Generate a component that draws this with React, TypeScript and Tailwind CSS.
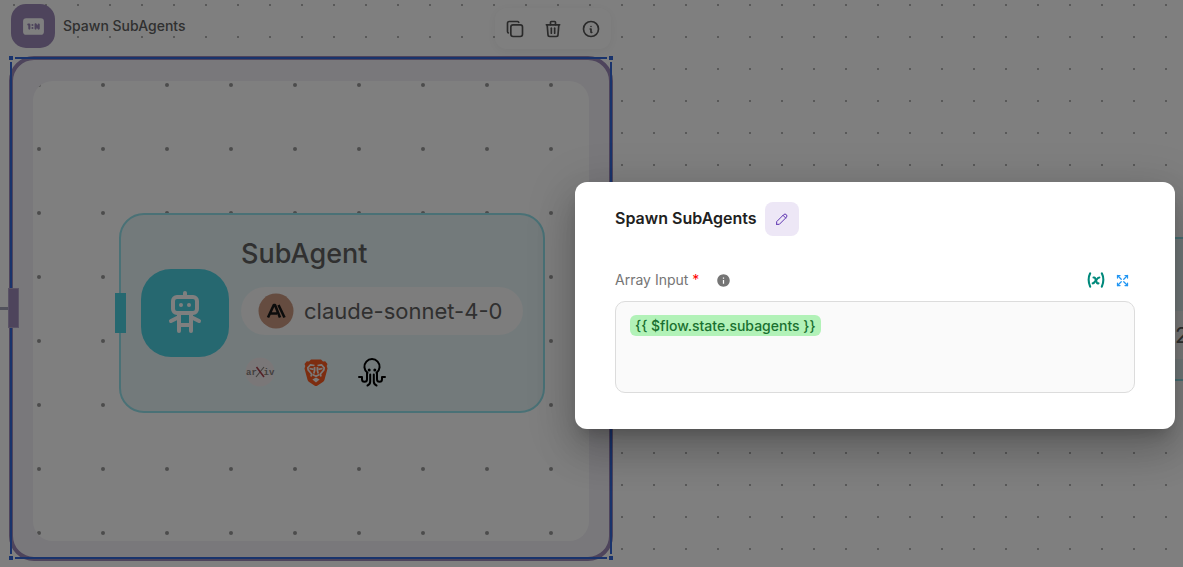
import { useState } from "react";
import {
    TbArrowsMaximize,
    TbCopy,
    TbInfoCircle,
    TbPencil,
    TbRelationOneToManyFilled,
    TbRobot,
    TbTrash,
    TbVariable,
} from "react-icons/tb";
import { MdInfo } from "react-icons/md";

function DotGrid({ id, gap, x, y, r }: { id: string; gap: number; x: number; y: number; r: number }) {
    return (
        <svg className="absolute inset-0 size-full" aria-hidden="true">
            <pattern id={id} x={x - gap / 2} y={y - gap / 2} width={gap} height={gap} patternUnits="userSpaceOnUse">
                <circle cx={gap / 2} cy={gap / 2} r={r} fill="#999999" />
            </pattern>
            <rect width="100%" height="100%" fill={`url(#${id})`} />
        </svg>
    );
}

function AnthropicLogo() {
    return (
        <svg viewBox="0 0 36 36" className="size-9" aria-hidden="true">
            <circle cx="18" cy="18" r="17.5" fill="#CA9881" />
            <path
                d="M10 24.500 L15.800 12 H17 L22 24.500 M12.500 20.500 H19 M20.500 12 L26.500 24.500"
                fill="none"
                stroke="#191918"
                strokeWidth="2.6"
                strokeLinejoin="round"
            />
        </svg>
    );
}

function BraveLogo() {
    return (
        <svg viewBox="0 0 24 27" className="h-[27px] w-6" aria-hidden="true">
            <path
                d="M7 .5h10l2 2 2.200-.2L23.500 5l-.8 2 .8 2.500-3 11.300c-.5 1.400-1.400 2.100-2.400 2.800l-4.900 3.100c-.7.4-1.700.4-2.400 0l-4.900-3.100c-1-.7-1.900-1.400-2.400-2.800L.5 9.500 1.300 7 .5 5l2.300-2.700 2.200.2z"
                fill="#FB5A20"
            />
            <g fill="none" stroke="#F6F3F1" strokeWidth="1.700" strokeLinejoin="round">
                <path d="M10.500 6.500 6.500 5.800 3.800 8.800 4.200 11 7.600 15 7 17.500M13.500 6.500l4-.7 2.700 3L19.800 11l-3.400 4 .6 2.500" />
                <path d="M5.500 9.500l4 .8M18.500 9.500l-4 .8M10.600 8v3.500l-.8 3M13.400 8v3.500l.8 3" />
                <path d="M8.500 15.500 12 17.200l3.500-1.700" />
            </g>
            <path d="M12 18.500l3.600 2-3.600 3-3.600-3z" fill="#F6F3F1" />
        </svg>
    );
}

function OctopusLogo() {
    return (
        <svg viewBox="0 0 28 28" className="size-7 overflow-visible" aria-hidden="true">
            <g fill="none" stroke="#000" strokeWidth="2" strokeLinecap="round" strokeLinejoin="round">
                <path d="M9.500 14.800A7.600 7.600 0 1 1 18.500 14.800" />
                <path d="M1 19h3v2.200a2.500 2.500 0 0 0 5 0V14.800M27 19h-3v2.200a2.500 2.500 0 0 1-5 0V14.800" />
                <path d="M12.200 16.500V23.500c0 2-.8 3.200-2.700 4M15.800 16.500V23.500c0 2 .8 3.200 2.700 4" />
            </g>
            <circle cx="11.200" cy="12" r="1.500" />
            <circle cx="16.800" cy="12" r="1.500" />
        </svg>
    );
}

function ArxivLogo() {
    return (
        <svg viewBox="0 0 30 30" className="size-[30px]" role="img" aria-label="arXiv">
            <circle cx="15" cy="15" r="14.500" fill="#F4EFF0" />
            <g fill="#85807d" fontFamily="Liberation Mono, monospace" fontSize="9" fontWeight="700">
                <text x="1" y="18">ar</text>
                <text x="18.500" y="18">iv</text>
            </g>
            <path d="M19 10l-8 10" stroke="#85807d" strokeWidth="1.200" />
            <path d="M11.500 10l7.500 10" stroke="#A8404D" strokeWidth="1.600" />
        </svg>
    );
}

function NodeToolbar() {
    return (
        <div className="absolute left-[495px] top-2 flex h-[41px] items-center gap-[14px] rounded-xl bg-white px-2 text-[#555] shadow-[0_2px_12px_rgba(0,0,0,0.06)]">
            <button type="button" aria-label="Duplicate" className="grid size-6 place-items-center">
                <TbCopy size={20} />
            </button>
            <button type="button" aria-label="Delete" className="grid size-6 place-items-center">
                <TbTrash size={20} />
            </button>
            <button type="button" aria-label="Info" className="grid size-6 place-items-center">
                <TbInfoCircle size={20} />
            </button>
        </div>
    );
}

function SubAgentNode() {
    return (
        <div className="absolute left-[119px] top-[213px] flex h-[200px] w-[426px] items-center rounded-[25px] border-2 border-[#94e3ec] bg-[#e6f5f7] pl-5">
            <div className="absolute top-[78px] -left-[6px] h-10 w-[11px] bg-[#4DD0E1]" />
            <div className="grid size-[88px] shrink-0 place-items-center rounded-[30px] bg-[#4DD0E1] text-white">
                <TbRobot size={48} />
            </div>
            <div className="ml-3 flex flex-col">
                <h2 className="text-[27px] leading-9 font-medium text-[#616161]">SubAgent</h2>
                <div className="mt-[15px] flex h-12 w-[282px] items-center gap-[10px] rounded-full bg-[#fafafa] pl-[17px] text-[22px] text-[#616161]">
                    <AnthropicLogo />
                    <span>claude-sonnet-4-0</span>
                </div>
                <div className="mt-[19px] flex h-9 items-center gap-6 pl-[3px]">
                    <div className="grid size-8 place-items-center">
                        <ArxivLogo />
                    </div>
                    <div className="grid size-8 place-items-center">
                        <BraveLogo />
                    </div>
                    <div className="grid size-8 place-items-center">
                        <OctopusLogo />
                    </div>
                </div>
            </div>
        </div>
    );
}

function IterationNode() {
    return (
        <>
            <div className="absolute left-[11px] top-1 flex items-center gap-2">
                <div className="grid size-11 place-items-center rounded-[15px] bg-[#9C89B8] text-white">
                    <TbRelationOneToManyFilled size={25} />
                </div>
                <span className="text-sm font-medium text-[#616161]">Spawn SubAgents</span>
            </div>
            <div className="absolute left-[9px] top-[56px] h-[505px] w-[604px] rounded-[25px] border-4 border-[#9C89B8] bg-[#f3f1f7]">
                <div className="absolute inset-x-5 top-[21px] bottom-4 overflow-hidden rounded-[20px] bg-white">
                    <DotGrid id="inner-dots" gap={64} x={6} y={4} r={2} />
                </div>
            </div>
            {/* resize frame */}
            <div className="absolute left-[10px] top-[57px] h-[502px] w-[602px] border-2 border-[#3367d9]">
                <span className="absolute -top-[3px] -left-[3px] size-1 bg-[#3367d9] outline-2 outline-white" />
                <span className="absolute -top-[3px] -right-[3px] size-1 bg-[#3367d9] outline-2 outline-white" />
                <span className="absolute -bottom-[3px] -left-[3px] size-1 bg-[#3367d9] outline-2 outline-white" />
                <span className="absolute -right-[3px] -bottom-[3px] size-1 bg-[#3367d9] outline-2 outline-white" />
            </div>
            <div className="absolute top-[307px] left-0 h-[3px] w-[8px] bg-[#a5a5b8]" />
            <div className="absolute top-[288px] left-[8px] h-10 w-[11px] border border-[#b5a6ca] bg-[#9C89B8]" />
        </>
    );
}

export default function App() {
    const [expression, setExpression] = useState("{{ $flow.state.subagents }}");

    return (
        <main className="relative h-screen overflow-hidden bg-white font-['Inter',sans-serif]">
            <DotGrid id="canvas-dots" gap={32} x={14} y={5} r={1} />
            <IterationNode />
            <SubAgentNode />
            <NodeToolbar />

            {/* next agent in the flow, partly off the canvas */}
            <div className="absolute top-[237px] left-[1000px] h-[144px] w-[400px] border-2 border-[#94e3ec] bg-[#e6f5f7]">
                <div className="absolute top-[72px] left-0 flex h-12 w-full items-center bg-[#fafafa] pl-[173px] text-[22px] text-[#616161]">
                    2
                </div>
            </div>

            <div className="absolute inset-0 bg-black/50" />

            {/* Edit dialog */}
            <section
                role="dialog"
                aria-labelledby="dialog-title"
                className="absolute top-[182px] right-2 w-[600px] rounded-xl bg-white px-10 pt-5 pb-9 shadow-[0_11px_15px_-7px_rgba(0,0,0,0.2),0_24px_38px_3px_rgba(0,0,0,0.14),0_9px_46px_8px_rgba(0,0,0,0.12)]"
            >
                <header className="flex gap-2">
                    <h1 id="dialog-title" className="text-base leading-8 font-semibold text-[#212121]">
                        Spawn SubAgents
                    </h1>
                    <button
                        type="button"
                        aria-label="Edit name"
                        className="grid size-[34px] place-items-center rounded-lg bg-[#ede7f6] text-[#5e35b1]"
                    >
                        <TbPencil size={16} strokeWidth={1.5} />
                    </button>
                </header>

                <div className="mt-[34px] flex h-5 items-center">
                    <label htmlFor="array-input" className="text-sm text-[#757575]">
                        Array Input <span className="text-[#ff0000]">*</span>
                    </label>
                    <button type="button" aria-label="About array input" className="ml-[17px] text-[#757575]">
                        <MdInfo size={15} />
                    </button>
                    <button type="button" aria-label="Insert variable" className="ml-auto text-[#00897b]">
                        <TbVariable size={20} strokeWidth={2.5} />
                    </button>
                    <button type="button" aria-label="Expand" className="mr-[5px] ml-[9px] text-[#2196f3]">
                        <TbArrowsMaximize size={15} />
                    </button>
                </div>

                <div className="mt-[11px] flex h-[92px] items-start rounded-[10px] border border-[#dcdcdc] bg-[#fafafa] px-[14px] pt-[13px]">
                    <input
                        id="array-input"
                        value={expression}
                        onChange={(e) => setExpression(e.target.value)}
                        className="field-sizing-content h-[21px] rounded-md bg-[#b2f2b8] px-[5px] text-sm font-medium text-[#1a7030] outline-none"
                    />
                </div>
            </section>
        </main>
    );
}
